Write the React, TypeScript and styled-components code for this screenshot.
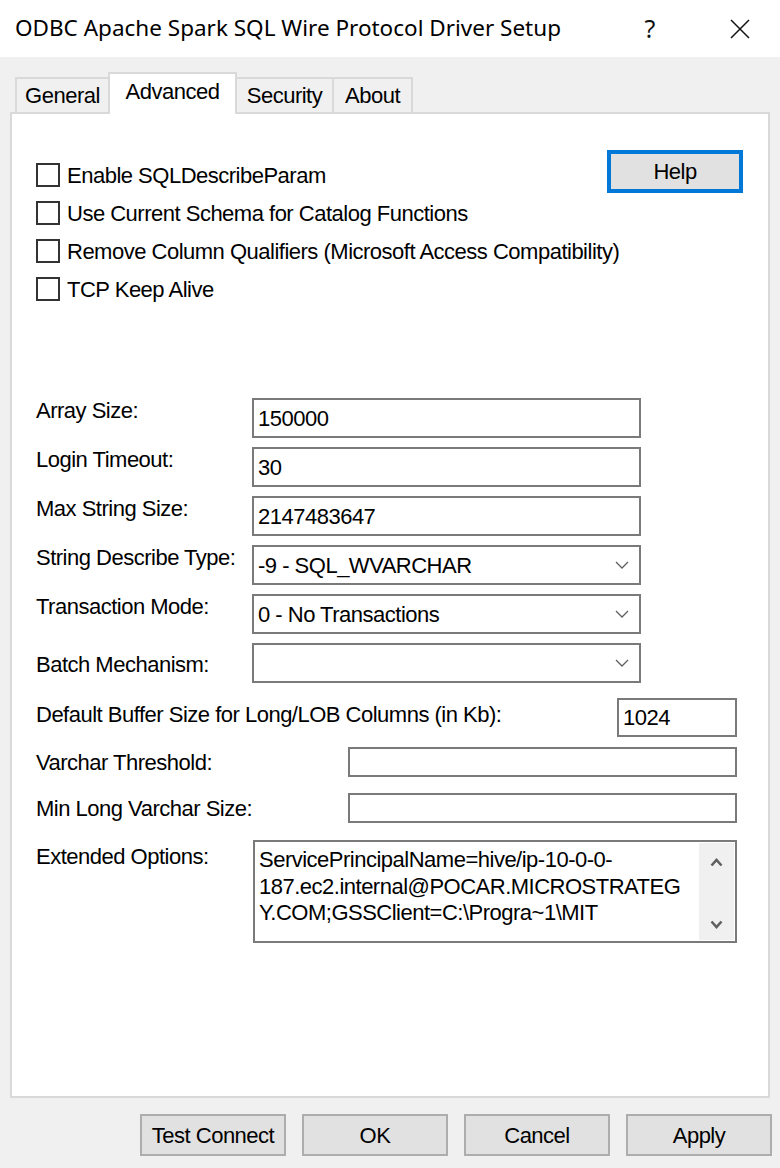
import styled, { createGlobalStyle } from "styled-components";

const UI_FONT = `"Liberation Sans", Arial, sans-serif`;
const TITLE_FONT = `"Noto Sans", "Open Sans", sans-serif`;

const GlobalStyle = createGlobalStyle`
  * {
    box-sizing: border-box;
  }

  html,
  body {
    margin: 0;
    padding: 0;
    background: #f0f0f0;
  }

  body {
    font-family: ${UI_FONT};
    font-size: 22px;
    letter-spacing: -0.5px;
    line-height: 25px;
    color: #000;
  }
`;

const Window = styled.div`
  width: 780px;
  height: 1168px;
  display: flex;
  flex-direction: column;
  background: #f0f0f0;
  overflow: hidden;
`;

const TitleBar = styled.div`
  flex: none;
  height: 57px;
  display: flex;
  align-items: center;
  padding-left: 15px;
  background: #fff;
`;

const Caption = styled.span`
  flex: 1;
  margin-top: -2px;
  font-family: ${TITLE_FONT};
  font-size: 22.5px;
  letter-spacing: 0;
  white-space: nowrap;
`;

const CaptionButton = styled.div<{ $w: number }>`
  flex: none;
  width: ${(p) => p.$w}px;
  height: 57px;
  display: flex;
  align-items: center;
  justify-content: center;
  font-family: ${TITLE_FONT};
  font-size: 25px;
  letter-spacing: 0;
  color: #111;
`;

const Body = styled.div`
  flex: 1;
  display: flex;
  flex-direction: column;
  padding: 15px 8px 0 10px;
`;

const TabStrip = styled.div`
  height: 40px;
  display: flex;
  align-items: flex-end;
  padding-left: 5px;
`;

const Tab = styled.div<{ $w: number; $active?: boolean }>`
  position: relative;
  z-index: ${(p) => (p.$active ? 2 : 1)};
  width: ${(p) => p.$w}px;
  height: ${(p) => (p.$active ? 42 : 35)}px;
  margin-left: -2px;
  margin-bottom: ${(p) => (p.$active ? -2 : 0)}px;
  padding-bottom: ${(p) => (p.$active ? 5 : 0)}px;
  display: flex;
  align-items: center;
  justify-content: center;
  border: 2px solid #d9d9d9;
  border-bottom: none;
  background: ${(p) => (p.$active ? "#fff" : "#f0f0f0")};
  white-space: nowrap;

  &:first-child {
    margin-left: 0;
  }
`;

const Panel = styled.div`
  height: 986px;
  margin-right: 2px;
  padding: 36px 25px 0 24px;
  border: 2px solid #d9d9d9;
  background: #fff;
`;

const TopSection = styled.div`
  display: flex;
  justify-content: space-between;
  align-items: flex-start;
`;

const CheckList = styled.div`
  flex: 1;
  min-width: 0;
  margin-top: 13px;
  display: flex;
  flex-direction: column;
  gap: 14px;
`;

const CheckRow = styled.label`
  display: flex;
  align-items: center;
  gap: 7px;
  height: 24px;
  white-space: nowrap;
`;

const CheckBox = styled.span`
  flex: none;
  width: 24px;
  height: 24px;
  border: 2px solid #333;
  background: #fff;
`;

const PushButton = styled.div<{ $w: number; $h: number; $default?: boolean }>`
  flex: none;
  width: ${(p) => p.$w}px;
  height: ${(p) => p.$h}px;
  display: flex;
  align-items: center;
  justify-content: center;
  background: #e1e1e1;
  border: ${(p) => (p.$default ? "4px solid #0078d7" : "2px solid #adadad")};
  white-space: nowrap;
`;

const FieldGrid = styled.div`
  margin-top: 97px;
  display: grid;
  grid-template-columns: 216px 389px;
  grid-auto-rows: 40px;
  row-gap: 9px;
`;

const FieldLabel = styled.span<{ $top?: number }>`
  padding-top: ${(p) => p.$top ?? 0}px;
  white-space: nowrap;
`;

const TextBox = styled.div<{ $w?: number; $h?: number }>`
  flex: none;
  width: ${(p) => (p.$w ? `${p.$w}px` : "auto")};
  height: ${(p) => (p.$h ? `${p.$h}px` : "auto")};
  display: flex;
  align-items: center;
  padding: 0 4px;
  border: 2px solid #7a7a7a;
  background: #fff;
  white-space: nowrap;
`;

const ComboBox = styled(TextBox)`
  justify-content: space-between;
  padding-right: 10px;
`;

const LowerSection = styled.div`
  margin-top: 15px;
  padding-right: 6px;
  display: flex;
  flex-direction: column;
`;

const LowerRow = styled.div<{ $gap?: number }>`
  margin-top: ${(p) => p.$gap ?? 0}px;
  display: flex;
  justify-content: space-between;
  align-items: flex-start;
`;

const MemoBox = styled.div`
  flex: none;
  width: 484px;
  height: 103px;
  display: flex;
  border: 2px solid #7a7a7a;
  background: #fff;
`;

const MemoText = styled.div`
  flex: 1;
  padding: 5px 0 0 4px;
  line-height: 26.5px;
  white-space: nowrap;
  overflow: hidden;
`;

const ScrollTrack = styled.div`
  flex: none;
  width: 35px;
  margin: 1px;
  display: flex;
  flex-direction: column;
  align-items: center;
  justify-content: space-between;
  padding: 15px 0 11px;
  background: #f0f0f0;
`;

const ButtonRow = styled.div`
  margin-top: 16px;
  display: flex;
  justify-content: flex-end;
  gap: 16px;
`;

function Chevron({ up }: { up?: boolean }) {
  return (
    <svg width="14" height="8" viewBox="0 0 14 8">
      <polyline
        points={up ? "1,7 7,1 13,7" : "1,1 7,7 13,1"}
        fill="none"
        stroke="#606060"
        strokeWidth="1.3"
      />
    </svg>
  );
}

function ScrollArrow({ up }: { up?: boolean }) {
  return (
    <svg width="13" height="9" viewBox="0 0 13 9">
      <polyline
        points={up ? "1.5,7.5 6.5,2 11.5,7.5" : "1.5,1.5 6.5,7 11.5,1.5"}
        fill="none"
        stroke="#606060"
        strokeWidth="2.6"
      />
    </svg>
  );
}

function CloseGlyph() {
  return (
    <svg width="20" height="20" viewBox="0 0 20 20">
      <path d="M1 1 L19 19 M19 1 L1 19" stroke="#111" strokeWidth="1.5" />
    </svg>
  );
}

const checks = [
  "Enable SQLDescribeParam",
  "Use Current Schema for Catalog Functions",
  "Remove Column Qualifiers (Microsoft Access Compatibility)",
  "TCP Keep Alive",
];

const extendedLines = [
  "ServicePrincipalName=hive/ip-10-0-0-",
  "187.ec2.internal@POCAR.MICROSTRATEG",
  "Y.COM;GSSClient=C:\\Progra~1\\MIT",
];

export default function App() {
  return (
    <>
      <GlobalStyle />
      <Window>
        <TitleBar>
          <Caption>ODBC Apache Spark SQL Wire Protocol Driver Setup</Caption>
          <CaptionButton $w={100}>?</CaptionButton>
          <CaptionButton $w={80}>
            <CloseGlyph />
          </CaptionButton>
        </TitleBar>

        <Body>
          <TabStrip>
            <Tab $w={95}>General</Tab>
            <Tab $w={129} $active>
              Advanced
            </Tab>
            <Tab $w={99}>Security</Tab>
            <Tab $w={81}>About</Tab>
          </TabStrip>

          <Panel>
            <TopSection>
              <CheckList>
                {checks.map((c) => (
                  <CheckRow key={c}>
                    <CheckBox />
                    {c}
                  </CheckRow>
                ))}
              </CheckList>
              <PushButton $w={136} $h={43} $default>
                Help
              </PushButton>
            </TopSection>

            <FieldGrid>
              <FieldLabel>Array Size:</FieldLabel>
              <TextBox>150000</TextBox>
              <FieldLabel>Login Timeout:</FieldLabel>
              <TextBox>30</TextBox>
              <FieldLabel>Max String Size:</FieldLabel>
              <TextBox>2147483647</TextBox>
              <FieldLabel>String Describe Type:</FieldLabel>
              <ComboBox>
                -9 - SQL_WVARCHAR
                <Chevron />
              </ComboBox>
              <FieldLabel>Transaction Mode:</FieldLabel>
              <ComboBox>
                0 - No Transactions
                <Chevron />
              </ComboBox>
              <FieldLabel $top={9}>Batch Mechanism:</FieldLabel>
              <ComboBox>
                <span />
                <Chevron />
              </ComboBox>
            </FieldGrid>

            <LowerSection>
              <LowerRow>
                <FieldLabel $top={4}>
                  Default Buffer Size for Long/LOB Columns (in Kb):
                </FieldLabel>
                <TextBox $w={120} $h={39}>
                  1024
                </TextBox>
              </LowerRow>
              <LowerRow $gap={10}>
                <FieldLabel $top={3}>Varchar Threshold:</FieldLabel>
                <TextBox $w={389} $h={30} />
              </LowerRow>
              <LowerRow $gap={16}>
                <FieldLabel $top={3}>Min Long Varchar Size:</FieldLabel>
                <TextBox $w={389} $h={30} />
              </LowerRow>
              <LowerRow $gap={17}>
                <FieldLabel $top={4}>Extended Options:</FieldLabel>
                <MemoBox>
                  <MemoText>
                    {extendedLines.map((l) => (
                      <div key={l}>{l}</div>
                    ))}
                  </MemoText>
                  <ScrollTrack>
                    <ScrollArrow up />
                    <ScrollArrow />
                  </ScrollTrack>
                </MemoBox>
              </LowerRow>
            </LowerSection>
          </Panel>

          <ButtonRow>
            <PushButton $w={146} $h={42}>
              Test Connect
            </PushButton>
            <PushButton $w={146} $h={42}>
              OK
            </PushButton>
            <PushButton $w={146} $h={42}>
              Cancel
            </PushButton>
            <PushButton $w={146} $h={42}>
              Apply
            </PushButton>
          </ButtonRow>
        </Body>
      </Window>
    </>
  );
}
